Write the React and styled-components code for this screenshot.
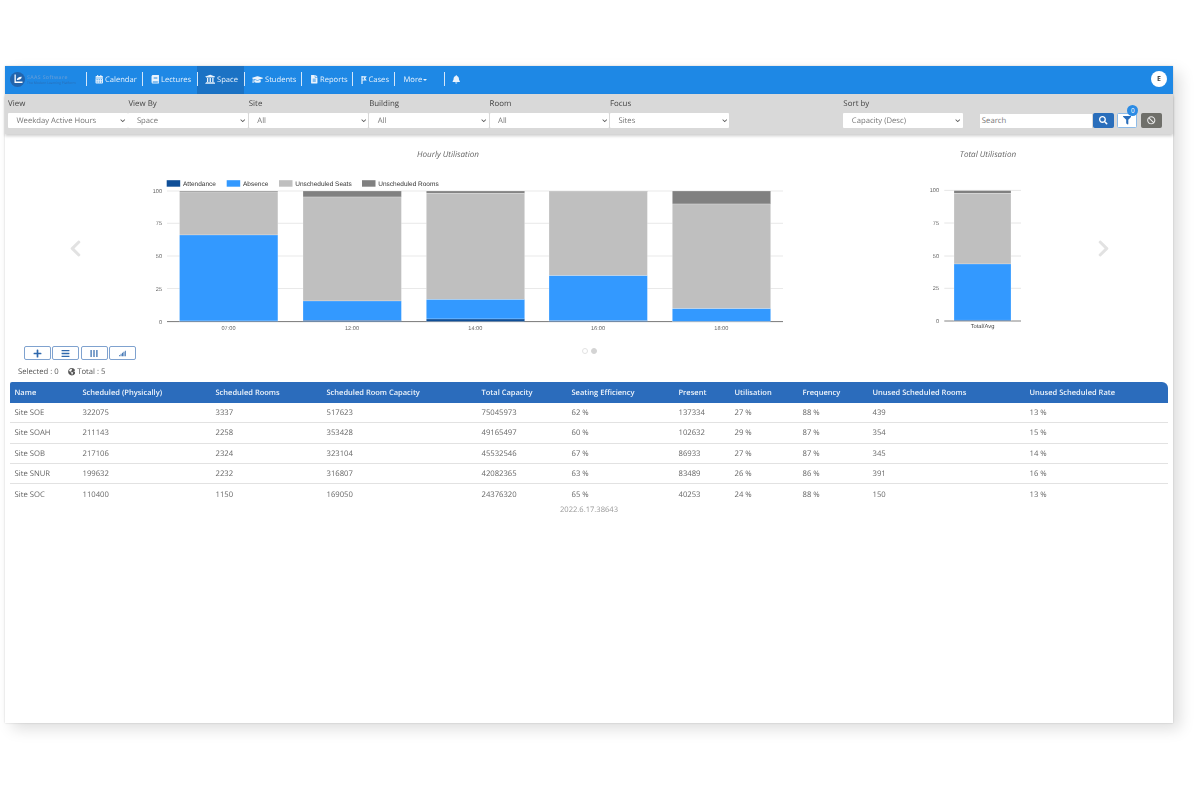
import React from 'react';
import styled, { createGlobalStyle } from 'styled-components';
import {
  FaCalendarAlt, FaBook, FaUniversity, FaGraduationCap, FaFileAlt, FaBell, FaSearch,
  FaFilter, FaBan, FaPlus, FaBars, FaSignal, FaGlobeAmericas, FaChevronLeft, FaChevronRight, FaChevronDown,
} from 'react-icons/fa';

const Global = createGlobalStyle`
  html, body { margin: 0; padding: 0; background: #fff; }
  body { font-family: "Open Sans", "Liberation Sans", sans-serif; min-height: 800px; padding-top: 66px; text-rendering: geometricPrecision; }
  * { box-sizing: border-box; }
`;

const Frame = styled.div`
  margin: 0 0 0 5px;
  width: 1168px;
  height: 657px;
  background: #fff;
  box-shadow: 0 0 2px rgba(0,0,0,.18), 7px 6px 14px rgba(0,0,0,.13);
  filter: blur(.35px);
`;

const Nav = styled.nav`
  height: 28px;
  background: #1e88e5;
  display: flex;
  align-items: center;
  padding-right: 6px;
`;
const Logo = styled.div`
  width: 81px;
  height: 100%;
  display: flex;
  align-items: center;
  gap: 2px;
  padding: 0 0 2px 5px;
`;
const LogoMark = styled.svg`
  width: 15px;
  height: 15px;
  flex: none;
`;
const LogoText = styled.div`
  display: flex;
  flex-direction: column;
  white-space: nowrap;
  & b { font-size: 5.2px; line-height: 6px; letter-spacing: .35px; font-weight: 600; color: #5c9ad9; }
  & span { font-size: 3.4px; line-height: 5px; color: #2a6db5; }
`;
const NavItem = styled.a`
  height: 100%;
  display: flex;
  align-items: center;
  gap: 2px;
  padding: 0 5px 1px ${p => p.$pl || 8.5}px;
  color: #eaf3fc;
  font-size: 7.6px;
  position: relative;
  white-space: nowrap;
  background: ${p => (p.$active ? '#1b72c4' : 'transparent')};
  width: ${p => p.$w}px;
  & svg { font-size: ${p => p.$icon || 8.5}px; flex: none; }
  &::before {
    content: '';
    position: absolute;
    left: 0;
    top: 6px;
    bottom: 8px;
    width: 1px;
    background: #d4e7f9;
  }
`;
const CasesGlyph = styled.svg`
  width: 6px;
  height: 8px;
`;
const Caret = styled.i`
  width: 0;
  height: 0;
  border-left: 2px solid transparent;
  border-right: 2px solid transparent;
  border-top: 2px solid #eaf3fc;
  margin-left: -1px;
`;
const Avatar = styled.div`
  margin: -2px 0 0 auto;
  width: 16px;
  height: 16px;
  border-radius: 50%;
  background: #fff;
  color: #444;
  font-size: 7px;
  font-weight: 700;
  display: flex;
  align-items: center;
  justify-content: center;
`;

const Filters = styled.div`
  height: 40px;
  background: #d9d9d9;
  padding: 4px 11px 0 3px;
  display: flex;
  align-items: flex-start;
  box-shadow: 0 2px 3px rgba(0,0,0,.2);
  position: relative;
`;
const Field = styled.div`
  width: ${p => p.$w || 120.4}px;
  margin-left: ${p => p.$ml || 0}px;
`;
const FieldLabel = styled.label`
  display: block;
  height: 15px;
  line-height: 12.5px;
  font-size: 7.9px;
  color: #444;
`;
const Select = styled.div`
  width: ${p => p.$w || 119.5}px;
  height: 14.5px;
  background: #fff;
  border-radius: 1px;
  display: flex;
  align-items: center;
  justify-content: space-between;
  padding: 1px 2px 0 8.5px;
  color: #777;
  font-size: 7.7px;
  & svg { font-size: 5.5px; color: #555; margin-top: -1px; }
`;
const SearchArea = styled.div`
  margin-left: 17px;
  padding-top: 15px;
  display: flex;
  align-items: flex-start;
`;
const SearchInput = styled.div`
  width: 112px;
  height: 14px;
  margin-top: 1px;
  background: #fff;
  color: #777;
  font-size: 7.7px;
  line-height: 14px;
  padding-left: 2px;
`;
const ToolButton = styled.button`
  width: ${p => p.$w}px;
  height: 15px;
  margin-left: ${p => p.$ml}px;
  padding: 0;
  border: 1px solid ${p => p.$border};
  border-radius: 1.5px;
  background: ${p => p.$bg};
  color: ${p => p.$fg};
  font-size: 8.5px;
  display: flex;
  align-items: center;
  justify-content: center;
  position: relative;
`;
const Badge = styled.span`
  position: absolute;
  top: -9px;
  right: -2.5px;
  width: 11px;
  height: 11px;
  border-radius: 50%;
  background: #2b8be4;
  color: #fff;
  font-size: 6.5px;
  line-height: 11px;
  text-align: center;
`;

const Carousel = styled.section`
  height: 208px;
  display: flex;
  align-items: flex-start;
`;
const ArrowCell = styled.div`
  width: ${p => p.$w}px;
  height: 100%;
  display: flex;
  align-items: center;
  justify-content: ${p => (p.$right ? 'flex-start' : 'flex-end')};
  padding: 20px ${p => (p.$right ? 0 : 15)}px 0 ${p => (p.$right ? 18 : 0)}px;
  color: #e2e2e2;
  font-size: 19px;
`;
const Panel = styled.div`
  width: ${p => p.$w}px;
  margin-left: ${p => p.$ml || 0}px;
  padding-top: 15px;
  flex: none;
`;
const PanelTitle = styled.h3`
  margin: 0;
  height: 26px;
  line-height: 11px;
  font-size: 8.1px;
  font-weight: 400;
  font-style: italic;
  text-align: center;
  color: #666;
`;
const ChartSvg = styled.svg`
  display: block;
  font-family: "Liberation Sans", Arial, sans-serif;
`;

const ToolRow = styled.div`
  display: grid;
  grid-template-columns: 1fr auto 1fr;
  align-items: start;
  padding: 4px 19px 0;
  height: 20px;
`;
const GroupButtons = styled.div`
  display: flex;
  gap: 1.3px;
`;
const IconButton = styled.button`
  width: 27px;
  height: 14px;
  padding: 0;
  background: #fff;
  border: 1px solid #7fa2cf;
  border-radius: 2px;
  color: #2f68ad;
  font-size: ${p => p.$size || 8}px;
  display: flex;
  align-items: center;
  justify-content: center;
`;
const Dots = styled.div`
  display: flex;
  gap: 3px;
  padding-top: 2px;
`;
const Dot = styled.span`
  width: 6px;
  height: 6px;
  border-radius: 50%;
  background: ${p => (p.$on ? '#d4d4d4' : '#fff')};
  border: 1px solid ${p => (p.$on ? '#d4d4d4' : '#e2e2e2')};
`;
const Counts = styled.div`
  height: 20px;
  padding: 4px 0 0 13px;
  display: flex;
  align-items: flex-start;
  gap: 9px;
  font-size: 7.7px;
  line-height: 12px;
  color: #555;
`;
const Total = styled.span`
  display: flex;
  align-items: center;
  gap: 2px;
  & svg { font-size: 7.5px; color: #555; }
`;

const Table = styled.table`
  margin-left: 5px;
  width: 1158px;
  border-collapse: separate;
  border-spacing: 0;
  table-layout: fixed;
  font-size: 7.7px;
`;
const Th = styled.th`
  height: 21px;
  padding: 0 0 0 4.5px;
  background: #2b6cbc;
  color: #eef4fb;
  font-size: 7.5px;
  font-weight: 600;
  text-align: left;
  white-space: nowrap;
  &:first-child { border-top-left-radius: 2px; }
  &:last-child { border-top-right-radius: 6px; }
`;
const Td = styled.td`
  height: 20.25px;
  padding: 1px 0 0 4.5px;
  color: #666;
  white-space: nowrap;
  border-bottom: 1px solid #e2e2e2;
  tr:last-child > & { border-bottom: none; }
`;
const Version = styled.div`
  text-align: center;
  font-size: 7.6px;
  line-height: 10px;
  color: #999;
  padding-top: 1px;
`;

const COL = { att: '#0f4f98', abs: '#3399ff', seat: '#bfbfbf', room: '#808080' };

function Stack({ x, w, top, base, tops }) {
  const segs = [
    ['room', top, tops.seat],
    ['seat', tops.seat, tops.abs],
    ['abs', tops.abs, tops.att],
    ['att', tops.att, base],
  ];
  return segs.map(([k, a, b]) => (b - a > 0.05 ? (
    <rect key={k} x={x} y={a} width={w} height={b - a} fill={COL[k]} stroke="#fff" strokeOpacity=".45" strokeWidth=".5" />
  ) : null));
}

const HOURS = [
  { label: '07:00', x: 179.5, tops: { seat: 192, abs: 235, att: 321 } },
  { label: '12:00', x: 303, tops: { seat: 197, abs: 301, att: 320.4 } },
  { label: '14:00', x: 426.3, tops: { seat: 193.2, abs: 299.5, att: 319 } },
  { label: '16:00', x: 549, tops: { seat: 191.8, abs: 275.7, att: 320.8 } },
  { label: '18:00', x: 672.3, tops: { seat: 204, abs: 308.7, att: 321.4 } },
];
const LEGEND = [
  ['Attendance', 'att', 166.7], ['Absence', 'abs', 226.7], ['Unscheduled Seats', 'seat', 279], ['Unscheduled Rooms', 'room', 362],
];
const Y_TICKS = [[100, 191], [75, 223.3], [50, 256], [25, 288.5], [0, 321.6]];

function HourlyChart() {
  return (
    <ChartSvg width="696" height="165" viewBox="100 175 696 165">
      {LEGEND.map(([t, k, x]) => (
        <g key={k}>
          <rect x={x} y="180.2" width="13.5" height="6.5" fill={COL[k]} />
          <text x={x + 16.3} y="185.8" fontSize="6.5" fill="#333">{t}</text>
        </g>
      ))}
      {Y_TICKS.map(([v, y]) => (
        <g key={v}>
          <line x1="167" x2="783" y1={y} y2={y} stroke={v === 0 ? '#555' : '#e3e3e3'} strokeWidth=".8" />
          <text x="162" y={y + 2} fontSize="5.6" fill="#666" textAnchor="end">{v}</text>
        </g>
      ))}
      {HOURS.map(h => (
        <g key={h.label}>
          <Stack x={h.x} w={98.4} top={191} base={321.5} tops={h.tops} />
          <text x={h.x + 49} y="330" fontSize="5.6" fill="#666" textAnchor="middle">{h.label}</text>
        </g>
      ))}
    </ChartSvg>
  );
}

function TotalChart() {
  return (
    <ChartSvg width="176" height="165" viewBox="900 175 176 165">
      {[[100, 190.4], [75, 223], [50, 256], [25, 288.3], [0, 321]].map(([v, y]) => (
        <g key={v}>
          <line x1="944.3" x2="1021" y1={y} y2={y} stroke={v === 0 ? '#666' : '#e0e0e0'} strokeWidth=".8" />
          <text x="939" y={y + 2} fontSize="5.6" fill="#666" textAnchor="end">{v}</text>
        </g>
      ))}
      <Stack x={954} w={57} top={190.6} base={321} tops={{ seat: 193.3, abs: 264, att: 320.2 }} />
      <text x="982.5" y="327.6" fontSize="5.8" fill="#444" textAnchor="middle">Total/Avg</text>
    </ChartSvg>
  );
}

const WIDTHS = [68, 133, 111, 155, 90, 107, 56, 68, 70, 157, 143];
const HEAD = ['Name', 'Scheduled (Physically)', 'Scheduled Rooms', 'Scheduled Room Capacity', 'Total Capacity', 'Seating Efficiency', 'Present', 'Utilisation', 'Frequency', 'Unused Scheduled Rooms', 'Unused Scheduled Rate'];
const ROWS = [
  ['Site SOE', '322075', '3337', '517623', '75045973', '62 %', '137334', '27 %', '88 %', '439', '13 %'],
  ['Site SOAH', '211143', '2258', '353428', '49165497', '60 %', '102632', '29 %', '87 %', '354', '15 %'],
  ['Site SOB', '217106', '2324', '323104', '45532546', '67 %', '86933', '27 %', '87 %', '345', '14 %'],
  ['Site SNUR', '199632', '2232', '316807', '42082365', '63 %', '83489', '26 %', '86 %', '391', '16 %'],
  ['Site SOC', '110400', '1150', '169050', '24376320', '65 %', '40253', '24 %', '88 %', '150', '13 %'],
];
const SELECTS = [['View', 'Weekday Active Hours'], ['View By', 'Space'], ['Site', 'All'], ['Building', 'All'], ['Room', 'All'], ['Focus', 'Sites']];

const ColumnsGlyph = () => (
  <svg width="8" height="7" viewBox="0 0 8 7"><rect x="0.5" width="1.2" height="7" fill="currentColor" /><rect x="3.4" width="1.2" height="7" fill="currentColor" /><rect x="6.3" width="1.2" height="7" fill="currentColor" /></svg>
);

export default function App() {
  return (
    <>
      <Global />
      <Frame>
        <Nav>
          <Logo>
            <LogoMark viewBox="0 0 15 15">
              <circle cx="7.5" cy="7.5" r="7.5" fill="#2264ad" />
              <path d="M4.5 2.5h1.3v7h6.7v1.4H4.5z M6.8 8c0-2.2 2.2-3.5 5-3.3C11.500 6.900 9.300 8.200 6.800 8z" fill="#fff" />
            </LogoMark>
            <LogoText>
              <b>SAAS Software</b>
              <span>The Modern Learning Platform</span>
            </LogoText>
          </Logo>
          <NavItem $w={56}><FaCalendarAlt />Calendar</NavItem>
          <NavItem $w={55}><FaBook />Lectures</NavItem>
          <NavItem $w={46.5} $active $icon={10.5} $pl={7.5}><FaUniversity />Space</NavItem>
          <NavItem $w={57.5} $icon={11}><FaGraduationCap />Students</NavItem>
          <NavItem $w={51}><FaFileAlt />Reports</NavItem>
          <NavItem $w={41.5}>
            <CasesGlyph viewBox="0 0 6 8">
              <path d="M1 0v8M1 .8h3.6L3.400 2.400 4.600 4H1" fill="none" stroke="currentColor" strokeWidth="1.2" />
            </CasesGlyph>
            Cases
          </NavItem>
          <NavItem $w={50} $pl={10}>More<Caret /></NavItem>
          <NavItem $w={30}><FaBell /></NavItem>
          <Avatar>E</Avatar>
        </Nav>
        <Filters>
          {SELECTS.map(([l, v]) => (
            <Field key={l}>
              <FieldLabel>{l}</FieldLabel>
              <Select>{v}<FaChevronDown /></Select>
            </Field>
          ))}
          <Field $ml={113} $w={119.5}>
            <FieldLabel>Sort by</FieldLabel>
            <Select>Capacity (Desc)<FaChevronDown /></Select>
          </Field>
          <SearchArea>
            <SearchInput>Search</SearchInput>
            <ToolButton $w={21} $ml={1} $bg="#2a6ebb" $border="#2a6ebb" $fg="#fff"><FaSearch /></ToolButton>
            <ToolButton $w={20} $ml={3} $bg="#fff" $border="#8dbbe8" $fg="#2a6ebb"><FaFilter /><Badge>0</Badge></ToolButton>
            <ToolButton $w={21} $ml={4} $bg="#6f6f6a" $border="#6f6f6a" $fg="#e8e8e8"><FaBan /></ToolButton>
          </SearchArea>
        </Filters>
        <Carousel>
          <ArrowCell $w={95}><FaChevronLeft /></ArrowCell>
          <Panel $w={696}>
            <PanelTitle>Hourly Utilisation</PanelTitle>
            <HourlyChart />
          </Panel>
          <Panel $w={176} $ml={104}>
            <PanelTitle>Total Utilisation</PanelTitle>
            <TotalChart />
          </Panel>
          <ArrowCell $w={97} $right><FaChevronRight /></ArrowCell>
        </Carousel>
        <ToolRow>
          <GroupButtons>
            <IconButton $size={9}><FaPlus /></IconButton>
            <IconButton $size={9}><FaBars /></IconButton>
            <IconButton><ColumnsGlyph /></IconButton>
            <IconButton $size={7}><FaSignal /></IconButton>
          </GroupButtons>
          <Dots><Dot /><Dot $on /></Dots>
          <span />
        </ToolRow>
        <Counts>
          <span>Selected : 0</span>
          <Total><FaGlobeAmericas />Total : 5</Total>
        </Counts>
        <Table>
          <colgroup>{WIDTHS.map((w, i) => <col key={i} width={w} />)}</colgroup>
          <thead><tr>{HEAD.map(h => <Th key={h}>{h}</Th>)}</tr></thead>
          <tbody>
            {ROWS.map(r => <tr key={r[0]}>{r.map((c, i) => <Td key={i}>{c}</Td>)}</tr>)}
          </tbody>
        </Table>
        <Version>2022.6.17.38643</Version>
      </Frame>
    </>
  );
}
